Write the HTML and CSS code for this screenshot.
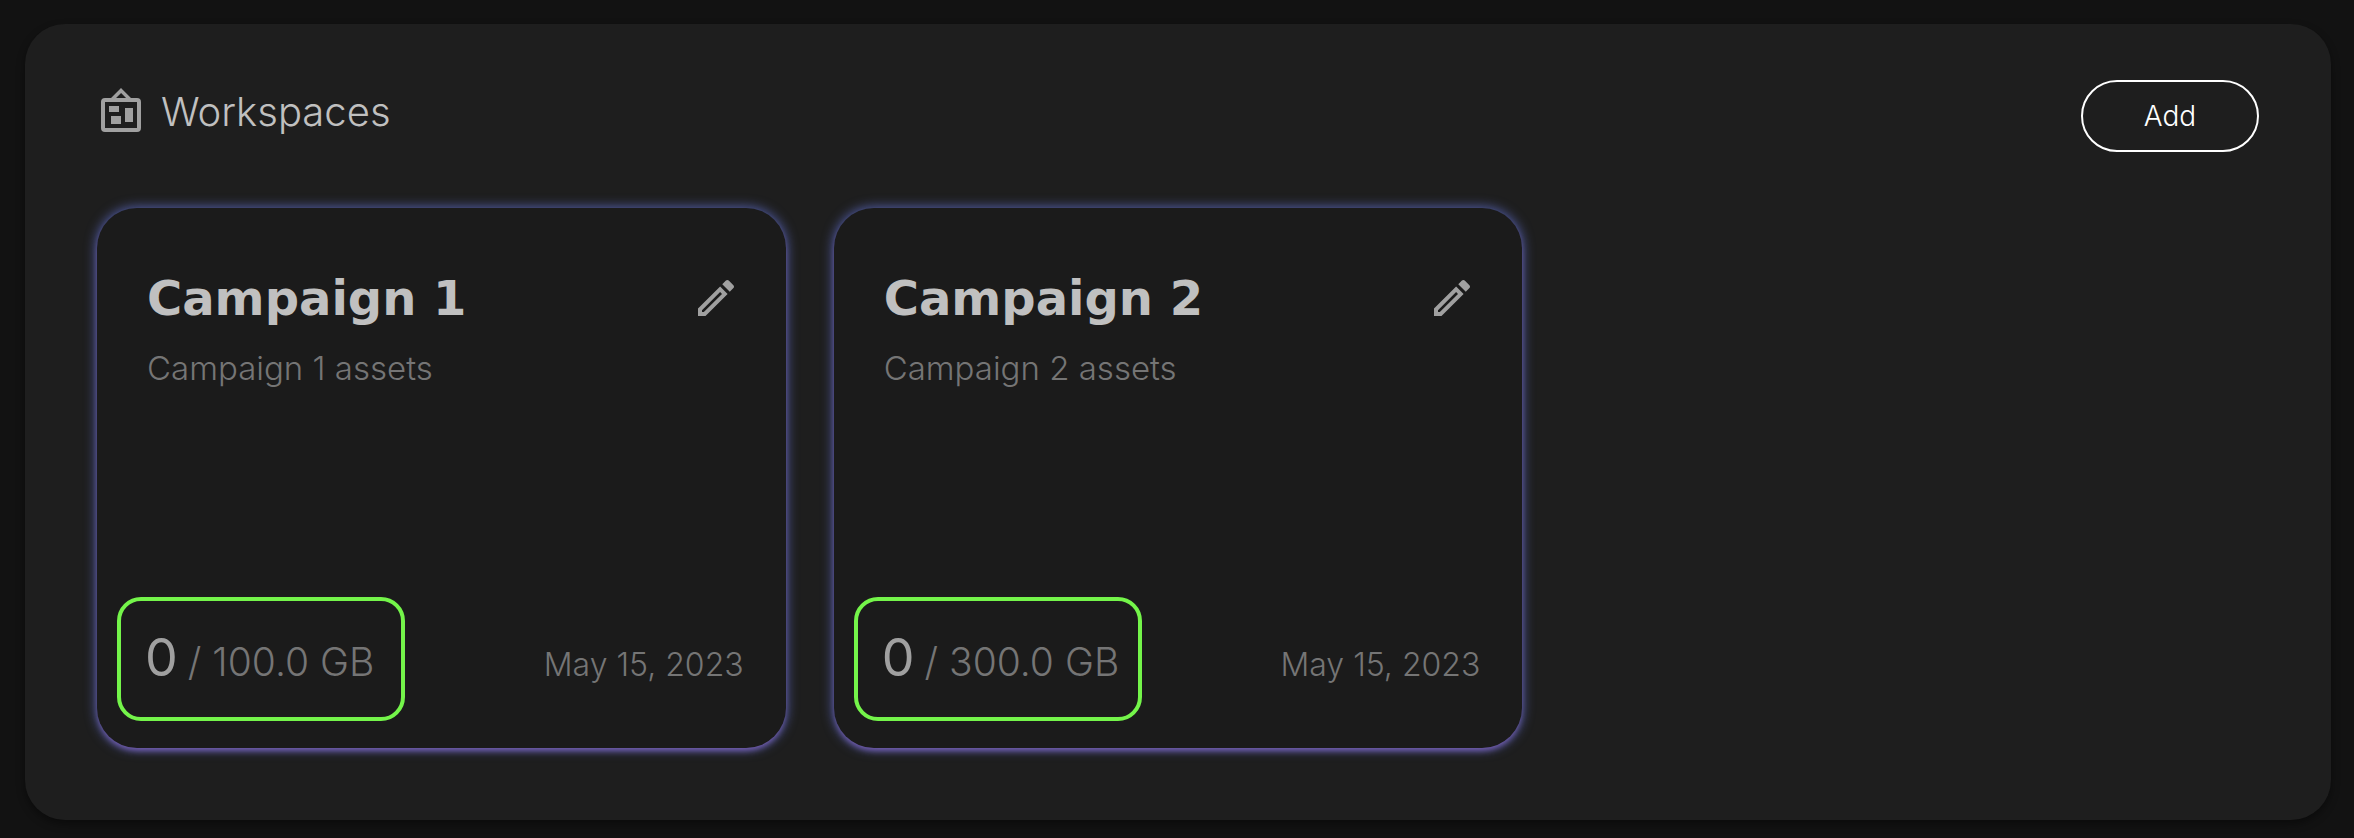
FILE: index.html
```html
<!DOCTYPE html>
<html lang="en">
<head>
<meta charset="utf-8">
<title>Workspaces</title>
<link rel="stylesheet" href="styles.css">
</head>
<body>
<main class="panel">
  <header class="panel-header">
    <h1 class="panel-title">
      <svg class="icon" viewBox="0 0 24 24" aria-hidden="true"><path d="M12.04,2.5L9.53,5H14.53L12.04,2.5M4,7V20H20V7H4M12,0L17,5V5H20A2,2 0 0,1 22,7V20A2,2 0 0,1 20,22H4A2,2 0 0,1 2,20V7A2,2 0 0,1 4,5H7V5L12,0M7,18V14H12V18H7M14,17V10H18V17H14M6,12V9H11V12H6Z"/></svg>
      <span>Workspaces</span>
    </h1>
    <button class="add-button" type="button">Add</button>
  </header>
  <section class="cards">
    <article class="card">
      <div class="card-head">
        <h2 class="card-title">Campaign 1</h2>
        <button class="edit-button" type="button" aria-label="Edit Campaign 1">
          <svg class="icon" viewBox="0 0 24 24" aria-hidden="true"><path d="M14.06,9L15,9.94L5.92,19H5V18.08L14.06,9M17.66,3C17.41,3 17.15,3.1 16.96,3.29L15.13,5.12L18.88,8.87L20.71,7.04C21.1,6.65 21.1,6 20.71,5.63L18.37,3.29C18.17,3.09 17.92,3 17.66,3M14.06,6.19L3,17.25V21H6.75L17.81,9.94L14.06,6.19Z"/></svg>
        </button>
      </div>
      <p class="card-text">Campaign 1 assets</p>
      <footer class="card-foot">
        <div class="usage"><span class="used">0</span><span class="quota">/ 100.0 GB</span></div>
        <time class="date" datetime="2023-05-15">May 15, 2023</time>
      </footer>
    </article>
    <article class="card">
      <div class="card-head">
        <h2 class="card-title">Campaign 2</h2>
        <button class="edit-button" type="button" aria-label="Edit Campaign 2">
          <svg class="icon" viewBox="0 0 24 24" aria-hidden="true"><path d="M14.06,9L15,9.94L5.92,19H5V18.08L14.06,9M17.66,3C17.41,3 17.15,3.1 16.96,3.29L15.13,5.12L18.88,8.87L20.71,7.04C21.1,6.65 21.1,6 20.71,5.63L18.37,3.29C18.17,3.09 17.92,3 17.66,3M14.06,6.19L3,17.25V21H6.75L17.81,9.94L14.06,6.19Z"/></svg>
        </button>
      </div>
      <p class="card-text">Campaign 2 assets</p>
      <footer class="card-foot">
        <div class="usage"><span class="used">0</span><span class="quota">/ 300.0 GB</span></div>
        <time class="date" datetime="2023-05-15">May 15, 2023</time>
      </footer>
    </article>
  </section>
</main>
</body>
</html>
```
FILE: styles.css
```css
* {
  box-sizing: border-box;
}

body {
  margin: 0;
  padding: 24px 23px 18px 25px;
  background: #121212;
  color: #c0c0c0;
  font-family: Inter, Lato, sans-serif;
  font-weight: 300;
}

h1, h2, p {
  margin: 0;
}

.panel {
  padding: 56px 72px 72px;
  border-radius: 40px;
  background: #1e1e1e;
  box-shadow: 0 4px 8px rgba(0, 0, 0, 0.4);
}

.panel-header {
  display: flex;
  justify-content: space-between;
  align-items: center;
  margin-bottom: 56px;
}

.panel-title {
  display: flex;
  align-items: center;
  gap: 16px;
  padding-bottom: 8px;
  font-size: 40px;
  line-height: 48px;
  font-weight: 300;
}

.icon {
  display: block;
  width: 48px;
  height: 48px;
  fill: #a0a0a0;
}

.add-button {
  min-width: 178px;
  height: 72px;
  border: 2px solid #fff;
  border-radius: 36px;
  background: transparent;
  color: #fff;
  font: inherit;
  font-size: 28px;
}

.cards {
  display: grid;
  grid-template-columns: repeat(3, 1fr);
  gap: 48px;
}

.card {
  display: flex;
  flex-direction: column;
  min-height: 540px;
  padding: 56px 42px 27px 20px;
  border-radius: 40px;
  background: #1b1b1b;
  box-shadow: 0 4px 6px -2px #7a5fb8, 0 0 12px 1px #535fa8;
}

.card-head {
  display: flex;
  justify-content: space-between;
  align-items: center;
  padding: 0 4px 0 30px;
}

.card-title {
  font-family: "DejaVu Sans", sans-serif;
  font-size: 48px;
  line-height: 68px;
  font-weight: 700;
}

.edit-button {
  padding: 0;
  border: 0;
  background: transparent;
}

.card-text {
  padding: 16px 0 0 30px;
  color: #757575;
  font-size: 33px;
  line-height: 40px;
}

.card-foot {
  display: flex;
  justify-content: space-between;
  align-items: baseline;
  margin-top: auto;
}

.usage {
  display: flex;
  align-items: baseline;
  gap: 10px;
  min-width: 288px;
  height: 124px;
  padding: 25px 16px 27px 24px;
  border: 4px solid #74f54a;
  border-radius: 24px;
  line-height: 64px;
  white-space: nowrap;
}

.used {
  color: #a0a0a0;
  font-size: 52px;
  font-weight: 400;
}

.quota {
  color: #757575;
  font-size: 39px;
}

.date {
  color: #757575;
  font-size: 32px;
}
```
